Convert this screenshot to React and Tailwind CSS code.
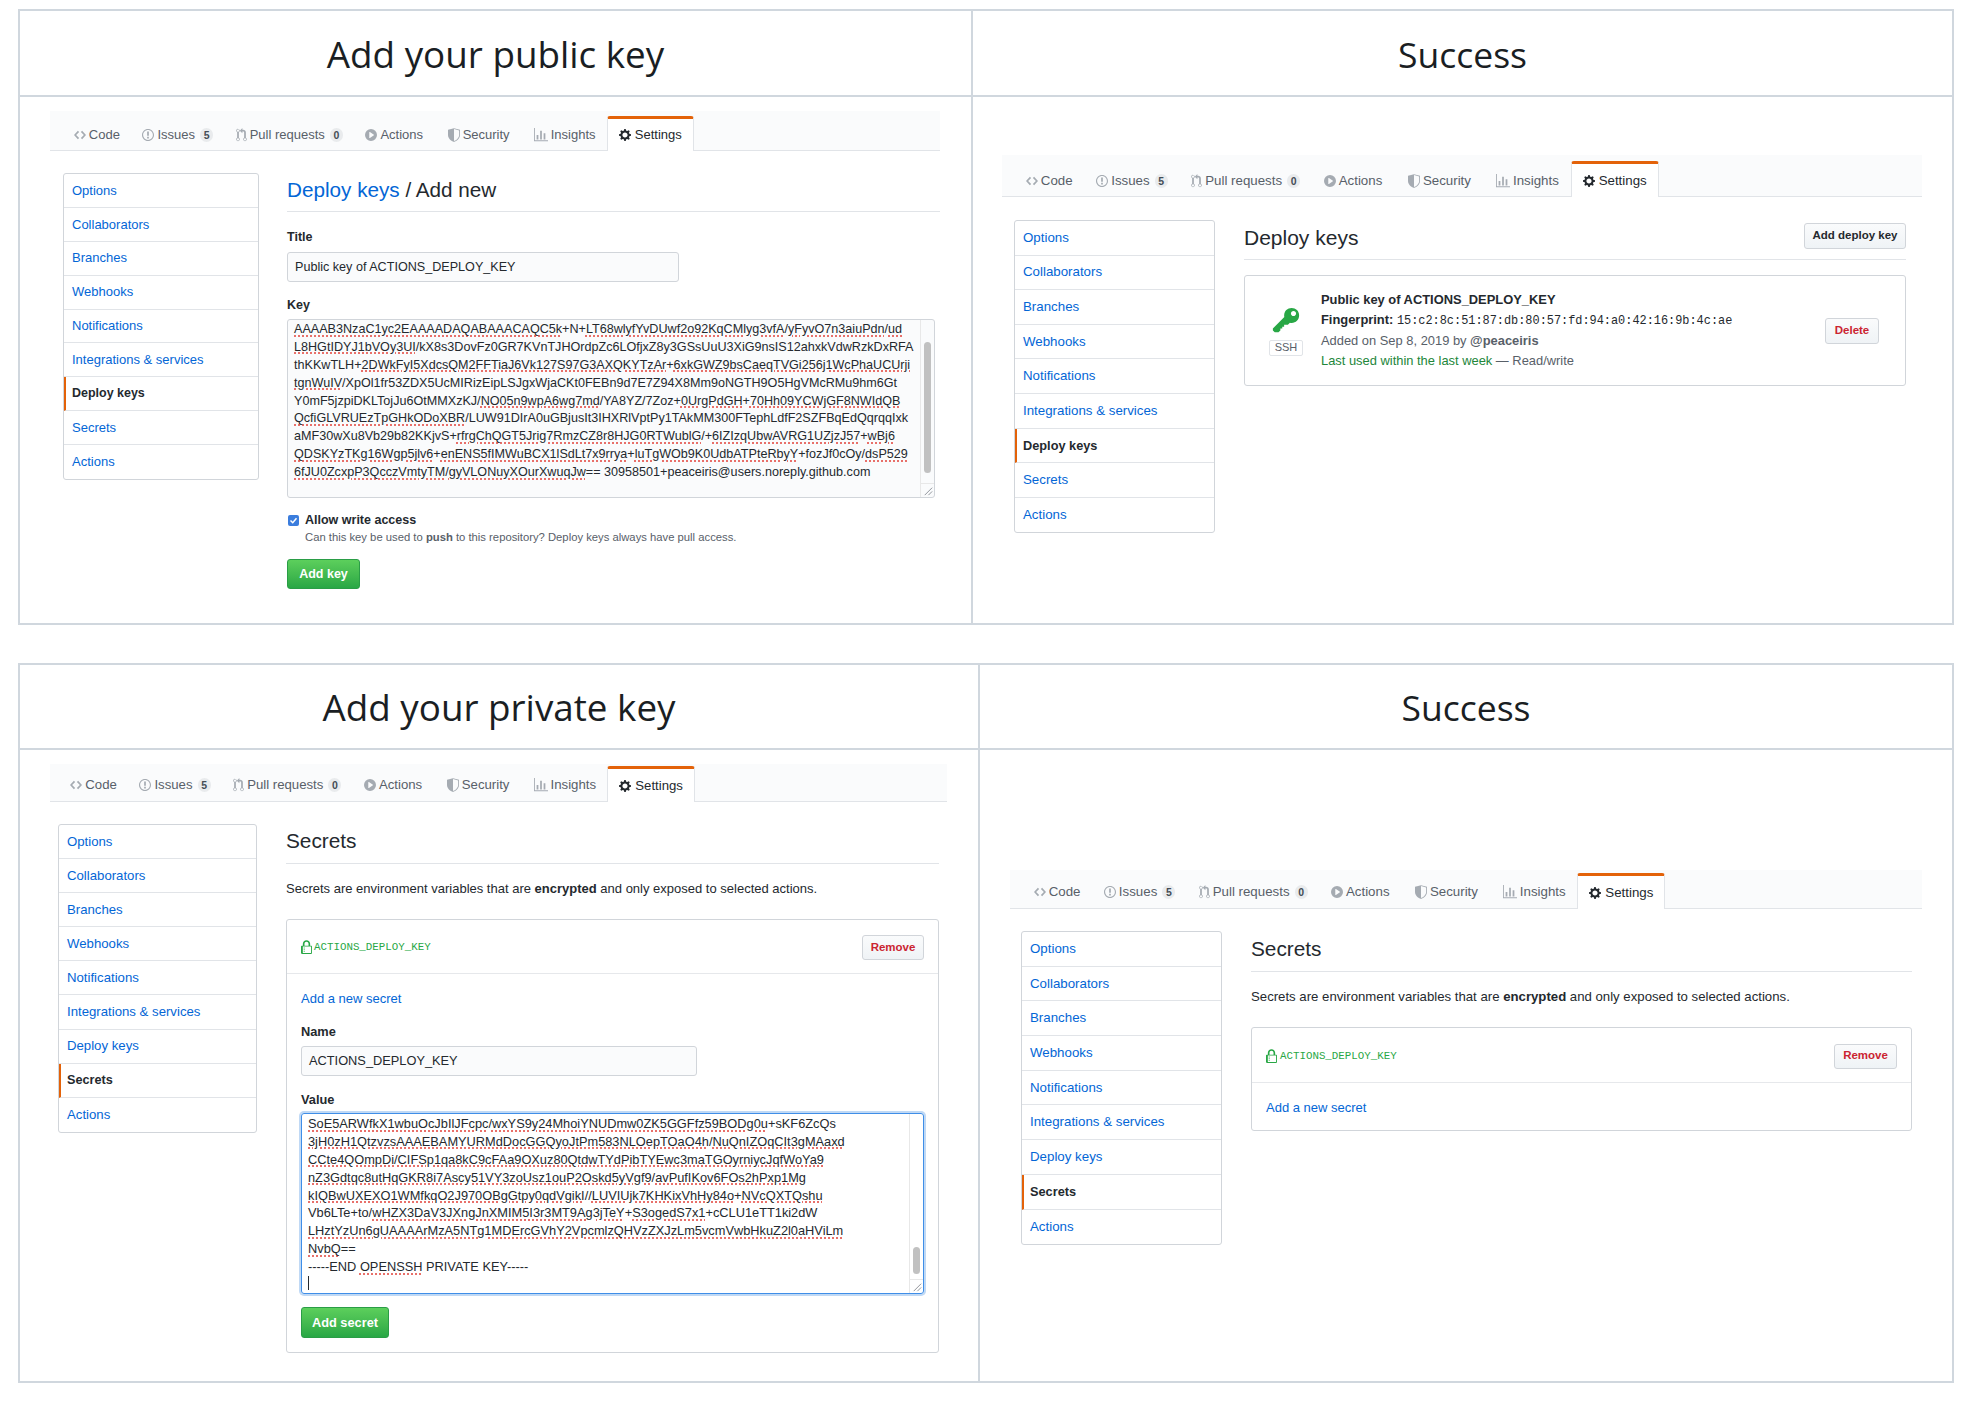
import React from 'react';

const SANS = "font-['Liberation_Sans',Arial,sans-serif]";
const MONO = "font-['Liberation_Mono','DejaVu_Sans_Mono',monospace]";

// old octicons, the new ones in react-icons have other strokes
const icons = {
  code: ['0 0 14 16', 'M9.5 3L8 4.5 11.5 8 8 11.5 9.5 13 14 8 9.5 3zm-5 0L0 8l4.5 5L6 11.5 2.5 8 6 4.5 4.5 3z'],
  issue: ['0 0 14 16', 'M7 2.3c3.14 0 5.7 2.56 5.7 5.7s-2.56 5.7-5.7 5.7A5.71 5.71 0 0 1 1.3 8c0-3.14 2.56-5.7 5.7-5.7zM7 1C3.14 1 0 4.14 0 8s3.14 7 7 7 7-3.14 7-7-3.14-7-7-7zm1 3H6v5h2V4zm0 6H6v2h2v-2z'],
  pull: ['0 0 12 16', 'M11 11.28V5c-.03-.78-.34-1.47-.94-2.06C9.46 2.35 8.78 2.03 8 2H7V0L4 3l3 3V4h1c.27.02.48.11.69.31.21.2.3.42.31.69v6.28A1.993 1.993 0 0 0 10 15a1.993 1.993 0 0 0 1-3.72zm-1 2.92c-.66 0-1.2-.55-1.2-1.2 0-.65.55-1.2 1.2-1.2.65 0 1.2.55 1.2 1.2 0 .65-.55 1.2-1.2 1.2zM4 3c0-1.11-.89-2-2-2a1.993 1.993 0 0 0-1 3.72v6.56A1.993 1.993 0 0 0 2 15a1.993 1.993 0 0 0 1-3.72V4.72c.59-.34 1-.98 1-1.72zm-.8 10c0 .66-.55 1.2-1.2 1.2-.65 0-1.2-.55-1.2-1.2 0-.65.55-1.2 1.2-1.2.65 0 1.2.55 1.2 1.2zM2 4.2C1.34 4.2.8 3.65.8 3c0-.65.55-1.2 1.2-1.2.65 0 1.2.55 1.2 1.2 0 .65-.55 1.2-1.2 1.2z'],
  play: ['0 0 14 16', 'M14 8A7 7 0 1 1 0 8a7 7 0 0 1 14 0zm-8.223 3.482l4.599-3.066a.5.5 0 0 0 0-.832L5.777 4.518A.5.5 0 0 0 5 4.934v6.132a.5.5 0 0 0 .777.416z'],
  shield: ['0 0 14 16', 'M7 0L0 2v6.02C0 12.69 5.31 16 7 16c1.69 0 7-3.31 7-7.98V2L7 0zm0 1.05l6 1.72v5.25c0 3.9-4.6 6.9-6 6.95V1.05z'],
  graph: ['0 0 16 16', 'M16 14v1H0V0h1v14h15zM5 13H3V8h2v5zm4 0H7V3h2v10zm4 0h-2V6h2v7z'],
  gear: ['0 0 14 16', 'M14 8.77v-1.6l-1.94-.64-.45-1.09.88-1.84-1.13-1.13-1.81.91-1.09-.45-.69-1.92h-1.6l-.63 1.94-1.11.45-1.84-.88-1.13 1.13.91 1.81-.45 1.09L0 7.23v1.59l1.94.64.45 1.09-.88 1.84 1.13 1.13 1.81-.91 1.09.45.69 1.92h1.59l.63-1.94 1.11-.45 1.84.88 1.13-1.13-.92-1.81.47-1.09L14 8.75v.02zM7 11c-1.66 0-3-1.34-3-3s1.34-3 3-3 3 1.34 3 3-1.34 3-3 3z'],
  key: ['0 0 14 16', 'M12.83 2.17C12.08 1.42 11.14 1.03 10 1c-1.13.03-2.08.42-2.83 1.17S6.04 3.86 6.01 5c0 .3.03.59.09.89L0 12v1l1 1h2l1-1v-1h1v-1h1v-1h2l1.09-1.11c.3.08.59.11.91.11 1.14-.03 2.08-.42 2.83-1.17S13.97 6.14 14 5c-.03-1.14-.42-2.08-1.17-2.83zM11 5.38c-.77 0-1.38-.61-1.38-1.38 0-.77.61-1.38 1.38-1.38.77 0 1.38.61 1.38 1.38 0 .77-.61 1.38-1.38 1.38z'],
  lock: ['0 0 12 16', 'M4 13H3v-1h1v1zm8-6v7c0 .55-.45 1-1 1H1c-.55 0-1-.45-1-1V7c0-.55.45-1 1-1h1V4c0-2.2 1.8-4 4-4s4 1.8 4 4v2h1c.55 0 1 .45 1 1zM3.8 6h4.41V4c0-1.22-.98-2.2-2.2-2.2-1.22 0-2.2.98-2.2 2.2v2H3.8zM11 7H2v7h9V7zM4 8H3v1h1V8zm0 2H3v1h1v-1z'],
};

const Icon = ({ name, className }) => (
  <svg viewBox={icons[name][0]} className={className} fill="currentColor">
    <path fillRule="evenodd" d={icons[name][1]} />
  </svg>
);

const tabs = [
  { label: 'Code', icon: 'code', iconClass: 'w-[12px] h-[14px]', extra: '' },
  { label: 'Issues', icon: 'issue', iconClass: 'w-[12px] h-[14px]', count: 5, extra: '' },
  { label: 'Pull requests', icon: 'pull', iconClass: 'w-[11px] h-[14px]', count: 0, extra: '' },
  { label: 'Actions', icon: 'play', iconClass: 'w-[12px] h-[14px]', extra: '' },
  { label: 'Security', icon: 'shield', iconClass: 'w-[12px] h-[14px]', extra: 'ml-[2px]' },
  { label: 'Insights', icon: 'graph', iconClass: 'w-[14px] h-[14px]', extra: 'ml-[1.5px]' },
];

const sideItems = ['Options', 'Collaborators', 'Branches', 'Webhooks', 'Notifications', 'Integrations & services', 'Deploy keys', 'Secrets', 'Actions'];

const RepoTabs = ({ barClass, tabClass, settingsClass }) => (
  <div className={`flex items-end bg-[#fafbfc] border-b border-[#e1e4e8] ${barClass}`}>
    {tabs.map(t => (
      <div key={t.label} className={`flex items-center gap-[3px] h-[32px] text-[#586069] whitespace-nowrap ${tabClass} ${t.extra}`}>
        <Icon name={t.icon} className={`${t.iconClass} text-[#a5abb2]`} />
        <span>{t.label}</span>
        {t.count !== undefined && (
          <span className="ml-[2px] min-w-[13px] h-[14px] px-[2px] rounded-full bg-[#e9ebed] text-[10.5px] font-bold leading-[14px] text-center text-[#444d56]">{t.count}</span>
        )}
      </div>
    ))}
    <div className={`flex items-center gap-[4px] bg-white border-x border-[#e1e4e8] border-t-[3px] border-t-[#e36209] rounded-t-[3px] -mb-px text-[#24292e] whitespace-nowrap ${settingsClass}`}>
      <Icon name="gear" className="w-[12px] h-[14px]" />
      <span>Settings</span>
    </div>
  </div>
);

const Sidebar = ({ active, className, rowClass }) => (
  <div className={`shrink-0 self-start bg-white border border-[#d1d5da] rounded-[3px] overflow-hidden ${className}`}>
    {sideItems.map((item, i) => (
      <div
        key={item}
        className={`flex items-center ${rowClass} ${i < 8 ? 'border-b border-[#e1e4e8]' : ''} ${item === active ? 'border-l-2 border-l-[#e36209] pl-[6px] font-semibold text-[#24292e] text-[0.96em]' : 'pl-[8px] text-[#0366d6]'}`}
      >
        {item}
      </div>
    ))}
  </div>
);

const Repo = ({ active, barClass, tabClass, settingsClass, sideClass, rowClass, sizeClass, bodyClass, children }) => (
  <div className={`${SANS} ${sizeClass}`}>
    <RepoTabs barClass={barClass} tabClass={tabClass} settingsClass={settingsClass} />
    <div className={`flex ${bodyClass}`}>
      <Sidebar active={active} className={sideClass} rowClass={rowClass} />
      <div className="flex-1 min-w-0">{children}</div>
    </div>
  </div>
);

const Head = ({ className, children }) => (
  <h1 className={`flex items-center justify-center pt-[3px] border-b-2 border-[#d0d7de] font-medium text-[#1a1e23] font-['Open_Sans',sans-serif] ${className}`}>
    {children}
  </h1>
);

// "|" toggles the spell check underline
const SpellLine = ({ text }) => (
  <div className="h-[17.9px] leading-[17.9px] whitespace-pre">
    {text.split('|').map((part, i) => (
      i % 2
        ? <span key={i} className="underline decoration-dotted decoration-[#e8706a] decoration-[1.5px] underline-offset-[2px]">{part}</span>
        : <span key={i}>{part}</span>
    ))}
  </div>
);

const Grip = () => (
  <svg viewBox="0 0 14 14" className="w-[13px] h-[13px] text-[#8a8f95]" stroke="currentColor" fill="none">
    <path d="M4 12L12 4M8 12l4-4" />
  </svg>
);

const publicKey = [
  '|AAAAB3NzaC1yc2EAAAADAQABAAACAQC5k|+N+|LT68wlyfYvDUwf2o92KqCMlyg3vfA|/|yFyvO7n3aiuPdn|/|ud|',
  '|L8HGtIDYJ1bVOy3UI|/kX8s3DovFz0GR7KVnTJHOrdpZc6LOfjxZ8y3GSsUuU3XiG9nsIS12ahxkVdwRzkDxRFA',
  'thKKwTLH+|2DWkFyI5XdcsQM2FFTiaJ6Vk127S97G3AXQKYTzAr|+|6xkGWZ9bsCaeqTVGi256j1WcPhaUCUrji|',
  '|tgnWuIV|/XpOl1fr53ZDX5UcMIRizEipLSJgxWjaCKt0FEBn9d7E7Z94X8Mm9oNGTH9O5HgVMcRMu9hm6Gt',
  'Y0mF5jzpiDKLTojJu6OtMMXzKJ/|NO05n9wpA6wg7md|/YA8YZ/7Zoz+|0UrgPdGH|+|70Hh09YCWjGF8NWIdQB|',
  '|QcfiGLVRUEzTpGHkODoXBR|/LUW91DIrA0uGBjusIt3IHXRlVptPy1TAkMM300FTephLdfF2SZFBqEdQqrqqIxk',
  'aMF30wXu8Vb29b82KKjvS+|rfrgChQGT5Jrig7RmzCZ8r8HJG0RTWublG|/+|6IZIzqUbwAVRG1UZjzJ57|+|wBj6|',
  '|QDSKYzTKg16Wgp5jlv6|+|enENS5fIMWuBCX1lSdLt7x9rrya|+|luTgWOb9K0UdbATPteRbyY|+fozJf0cOy/|dsP529|',
  '|6fJU0ZcxpP3QcczVmtyTM|/|gyVLONuyXOurXwuqJw|== 30958501+peaceiris@users.noreply.github.com',
];

const privateKey = [
  '|SoE5ARWfkX1wbuOcJbIlJFcpc|/|wxYS9y24MhoiYNUDmw0ZK5GGFfz59BODg0u|+sKF6ZcQs',
  '|3jH0zH1QtzvzsAAAEBAMYURMdDocGGQyoJtPm583NLOepTOaO4h|/|NuQnIZOqCIt3gMAaxd|',
  '|CCte4QOmpDi|/|CIFSp1qa8kC9cFAa9OXuz80QtdwTYdPibTYEwc3maTGOyrniycJqfWoYa9|',
  '|nZ3Gdtqc8utHqGKR8i7Ascy51VY3zoUsz1ouP2Oskd5yVgf9|/|avPufIKov6FOs2hPxp1Mg|',
  '|kIQBwUXEXO1WMfkqO2J970OBgGtpy0qdVgikI|//|LUVIUjk7KHKixVhHy84o|+|NVcQXTQshu|',
  'Vb6LTe+to/|wHZX3DaV3JXngJnXMIM5I3r3MT9Ag3jTeY|+|S3ogedS7x1|+cCLU1eTT1ki2dW',
  '|LHztYzUn6gUAAAArMzA5NTg1MDErcGVhY2VpcmlzQHVzZXJzLm5vcmVwbHkuZ2l0aHViLm|',
  '|NvbQ|==',
  '-----END |OPENSSH| PRIVATE KEY-----',
];

const GreenButton = ({ className, children }) => (
  <div className={`flex items-center justify-center rounded-[3px] border border-[#2a9d46] bg-gradient-to-b from-[#5ccf5c] to-[#28a745] text-white font-bold ${className}`}>
    {children}
  </div>
);

const GrayButton = ({ className, children }) => (
  <div className={`flex items-center justify-center rounded-[3px] border border-[#d1d5da] bg-gradient-to-b from-[#fafbfc] to-[#eff3f6] font-bold text-[11.5px] ${className}`}>
    {children}
  </div>
);

const SecretRow = ({ rowClass, iconGap, btnClass }) => (
  <div className={`flex items-center justify-between border-b border-[#e6e8eb] pt-[2px] ${rowClass}`}>
    <div className={`flex items-center ${iconGap} text-[#28a745]`}>
      <Icon name="lock" className="w-[11px] h-[15px]" />
      <span className={`${MONO} text-[10.8px]`}>ACTIONS_DEPLOY_KEY</span>
    </div>
    <GrayButton className={`text-[#cb2431] ${btnClass}`}>Remove</GrayButton>
  </div>
);

const AddPublicKey = () => (
  <div className="text-[#24292e]">
    <h2 className="h-[40px] pb-[4px] flex items-center border-b border-[#e1e4e8] text-[20.7px]">
      <span className="text-[#0366d6]">Deploy keys</span>&nbsp;/ Add new
    </h2>
    <div className="mt-[18px] font-bold text-[12.5px] leading-[14px]">Title</div>
    <div className="mt-[8px] w-[392px] h-[30px] flex items-center px-[7px] border border-[#d1d5da] rounded-[3px] bg-[#fafbfc] text-[12.6px]">Public key of ACTIONS_DEPLOY_KEY</div>
    <div className="mt-[16px] font-bold text-[12.5px] leading-[14px]">Key</div>
    <div className="mt-[7px] w-[648px] h-[179px] flex border border-[#d1d5da] rounded-[3px] bg-[#fafbfc] text-[12.6px]">
      <div className="flex-1 pl-[6px] pt-px overflow-hidden">
        {publicKey.map(line => <SpellLine key={line} text={line} />)}
      </div>
      <div className="w-[14px] flex flex-col items-center border-l border-[#e8e8e8]">
        <div className="mt-[22px] w-[7px] h-[131px] rounded bg-[#c1c1c1]" />
        <div className="mt-auto w-full h-[14px] border-t border-[#e8e8e8]"><Grip /></div>
      </div>
    </div>
    <label className="mt-[15px] flex items-center gap-[6px] font-bold text-[12.5px] leading-[14px]">
      <span className="ml-px w-[11px] h-[11px] flex items-center justify-center rounded-[2px] bg-[#3b7ddd]">
        <svg viewBox="0 0 12 12" className="w-[9px] h-[9px]" fill="none" stroke="white" strokeWidth="2"><path d="M2 6l3 3 5-6" /></svg>
      </span>
      Allow write access
    </label>
    <div className="mt-[3px] ml-[18px] text-[11.27px] leading-[14px] text-[#586069]">Can this key be used to <b>push</b> to this repository? Deploy keys always have pull access.</div>
    <GreenButton className="mt-[15px] w-[73px] h-[30px] text-[12.5px]">Add key</GreenButton>
  </div>
);

const DeployKeys = () => (
  <div className="text-[#24292e]">
    <div className="h-[40px] flex items-center justify-between border-b border-[#e1e4e8]">
      <h2 className="text-[21px] pb-[4px]">Deploy keys</h2>
      <GrayButton className="w-[102px] h-[26px] mb-[8px]">Add deploy key</GrayButton>
    </div>
    <div className="mt-[15px] h-[111px] flex items-center pl-[24px] pr-[26px] border border-[#d1d5da] rounded-[3px]">
      <div className="w-[34px] flex flex-col items-center">
        <Icon name="key" className="w-[28px] h-[30px] text-[#28a745]" />
        <span className="mt-[4px] w-[34px] h-[16px] flex items-center justify-center border border-[#e1e4e8] rounded-[2px] text-[11px] text-[#586069]">SSH</span>
      </div>
      <div className="ml-[18px] flex-1 text-[12.9px] leading-[20px]">
        <div className="font-bold">Public key of ACTIONS_DEPLOY_KEY</div>
        <div><b>Fingerprint:</b> <span className={`${MONO} text-[11.9px]`}>15:c2:8c:51:87:db:80:57:fd:94:a0:42:16:9b:4c:ae</span></div>
        <div className="text-[#586069]">Added on Sep 8, 2019 by <b>@peaceiris</b></div>
        <div className="text-[#586069]"><span className="text-[#22863a]">Last used within the last week</span> — Read/write</div>
      </div>
      <GrayButton className="w-[54px] h-[26px] text-[#cb2431]">Delete</GrayButton>
    </div>
  </div>
);

const SecretsHead = ({ textClass }) => (
  <>
    <h2 className="h-[41px] flex items-center border-b border-[#e1e4e8] pb-[4px] text-[20.8px]">Secrets</h2>
    <p className={`mt-[16px] leading-[17px] ${textClass}`}>Secrets are environment variables that are <b>encrypted</b> and only exposed to selected actions.</p>
  </>
);

const AddSecret = () => (
  <div className="text-[#24292e]">
    <SecretsHead textClass="text-[13px]" />
    <div className="mt-[22px] h-[434px] border border-[#d1d5da] rounded-[3px]">
      <SecretRow rowClass="h-[54px] pl-[14px] pr-[14px]" iconGap="gap-[2px]" btnClass="w-[62px] h-[25px]" />
      <div className="px-[14px]">
        <div className="mt-[17px] text-[#0366d6] text-[13px] leading-[16px]">Add a new secret</div>
        <div className="mt-[18px] font-bold text-[12.8px] leading-[14px]">Name</div>
        <div className="mt-[7px] w-[396px] h-[30px] flex items-center px-[7px] border border-[#d1d5da] rounded-[3px] bg-[#fafbfc] text-[12.8px]">ACTIONS_DEPLOY_KEY</div>
        <div className="mt-[17px] font-bold text-[12.8px] leading-[14px]">Value</div>
        <div className="mt-[6px] w-[623px] h-[181px] flex border border-[#3f8ee8] rounded-[3px] shadow-[0_0_0_2px_rgba(3,102,214,0.25)] text-[12.8px]">
          <div className="flex-1 pl-[6px] pt-px overflow-hidden">
            {privateKey.map(line => <SpellLine key={line} text={line} />)}
            <div className="w-px h-[14px] bg-[#24292e]" />
          </div>
          <div className="w-[14px] flex flex-col items-center border-l border-[#e8e8e8]">
            <div className="mt-[133px] w-[7px] h-[27px] rounded bg-[#c1c1c1]" />
            <div className="mt-auto w-full h-[14px] border-t border-[#e8e8e8]"><Grip /></div>
          </div>
        </div>
        <GreenButton className="mt-[13px] w-[88px] h-[31px] text-[12.8px]">Add secret</GreenButton>
      </div>
    </div>
  </div>
);

const SecretsDone = () => (
  <div className="text-[#24292e]">
    <SecretsHead textClass="text-[13.2px]" />
    <div className="mt-[22px] h-[104px] border border-[#d1d5da] rounded-[3px]">
      <SecretRow rowClass="h-[55px] pl-[14px] pr-[14px]" iconGap="gap-[3px]" btnClass="w-[63px] h-[25px]" />
      <div className="mt-[17px] pl-[14px] text-[#0366d6] text-[13px] leading-[16px]">Add a new secret</div>
    </div>
  </div>
);

export default function App() {
  return (
    <div className="bg-white pt-[9px] pl-[18px] pb-[19px]">
      <section className="w-[1936px] h-[616px] border-2 border-[#d0d7de] grid grid-cols-[951px_1fr]">
        <div className="min-w-0">
          <Head className="h-[86px] text-[36.8px]">Add your public key</Head>
          <div className="pt-[14px] pl-[30px] pr-[31px]">
            <Repo
              active="Deploy keys"
              sizeClass="text-[13px]"
              barClass="h-[40px] pl-[12.5px]"
              tabClass="px-[11.3px] pt-[2px]"
              settingsClass="h-[35px] pl-[11px] pr-[11px]"
              bodyClass="mt-[21px] pl-[13px]"
              sideClass="w-[196px] mr-[28px] mt-px"
              rowClass="h-[33.9px]"
            >
              <AddPublicKey />
            </Repo>
          </div>
        </div>
        <div className="min-w-0 border-l-2 border-[#d0d7de]">
          <Head className="h-[86px] text-[35.5px]">Success</Head>
          <div className="pt-[58px] pl-[29px] pr-[30px]">
            <Repo
              active="Deploy keys"
              sizeClass="text-[13.3px]"
              barClass="h-[42px] pl-[12px]"
              tabClass="px-[11.8px] pt-px"
              settingsClass="h-[36px] pl-[11px] pr-[11px]"
              bodyClass="mt-[23px] pl-[12px] pr-[16px]"
              sideClass="w-[201px] mr-[29px]"
              rowClass="h-[34.6px]"
            >
              <DeployKeys />
            </Repo>
          </div>
        </div>
      </section>

      <section className="mt-[38px] w-[1936px] h-[720px] border-2 border-[#d0d7de] grid grid-cols-[958px_1fr]">
        <div className="min-w-0">
          <Head className="h-[85px] text-[36.8px]">Add your private key</Head>
          <div className="pt-[14px] pl-[30px] pr-[31px]">
            <Repo
              active="Secrets"
              sizeClass="text-[13.2px]"
              barClass="h-[38px] pl-[9px]"
              tabClass="px-[11.3px]"
              settingsClass="h-[36px] pl-[11px] pr-[11px]"
              bodyClass="mt-[21px] pl-[8px] pr-[8px]"
              sideClass="w-[199px] mr-[29px] mt-px"
              rowClass="h-[34.1px]"
            >
              <AddSecret />
            </Repo>
          </div>
        </div>
        <div className="min-w-0 border-l-2 border-[#d0d7de]">
          <Head className="h-[85px] text-[35.5px]">Success</Head>
          <div className="pt-[120px] pl-[30px] pr-[30px]">
            <Repo
              active="Secrets"
              sizeClass="text-[13.3px]"
              barClass="h-[39px] pl-[12px]"
              tabClass="px-[11.7px]"
              settingsClass="h-[36px] pl-[11px] pr-[11px]"
              bodyClass="mt-[22px] pl-[11px] pr-[10px]"
              sideClass="w-[201px] mr-[29px]"
              rowClass="h-[34.7px]"
            >
              <SecretsDone />
            </Repo>
          </div>
        </div>
      </section>
    </div>
  );
}
